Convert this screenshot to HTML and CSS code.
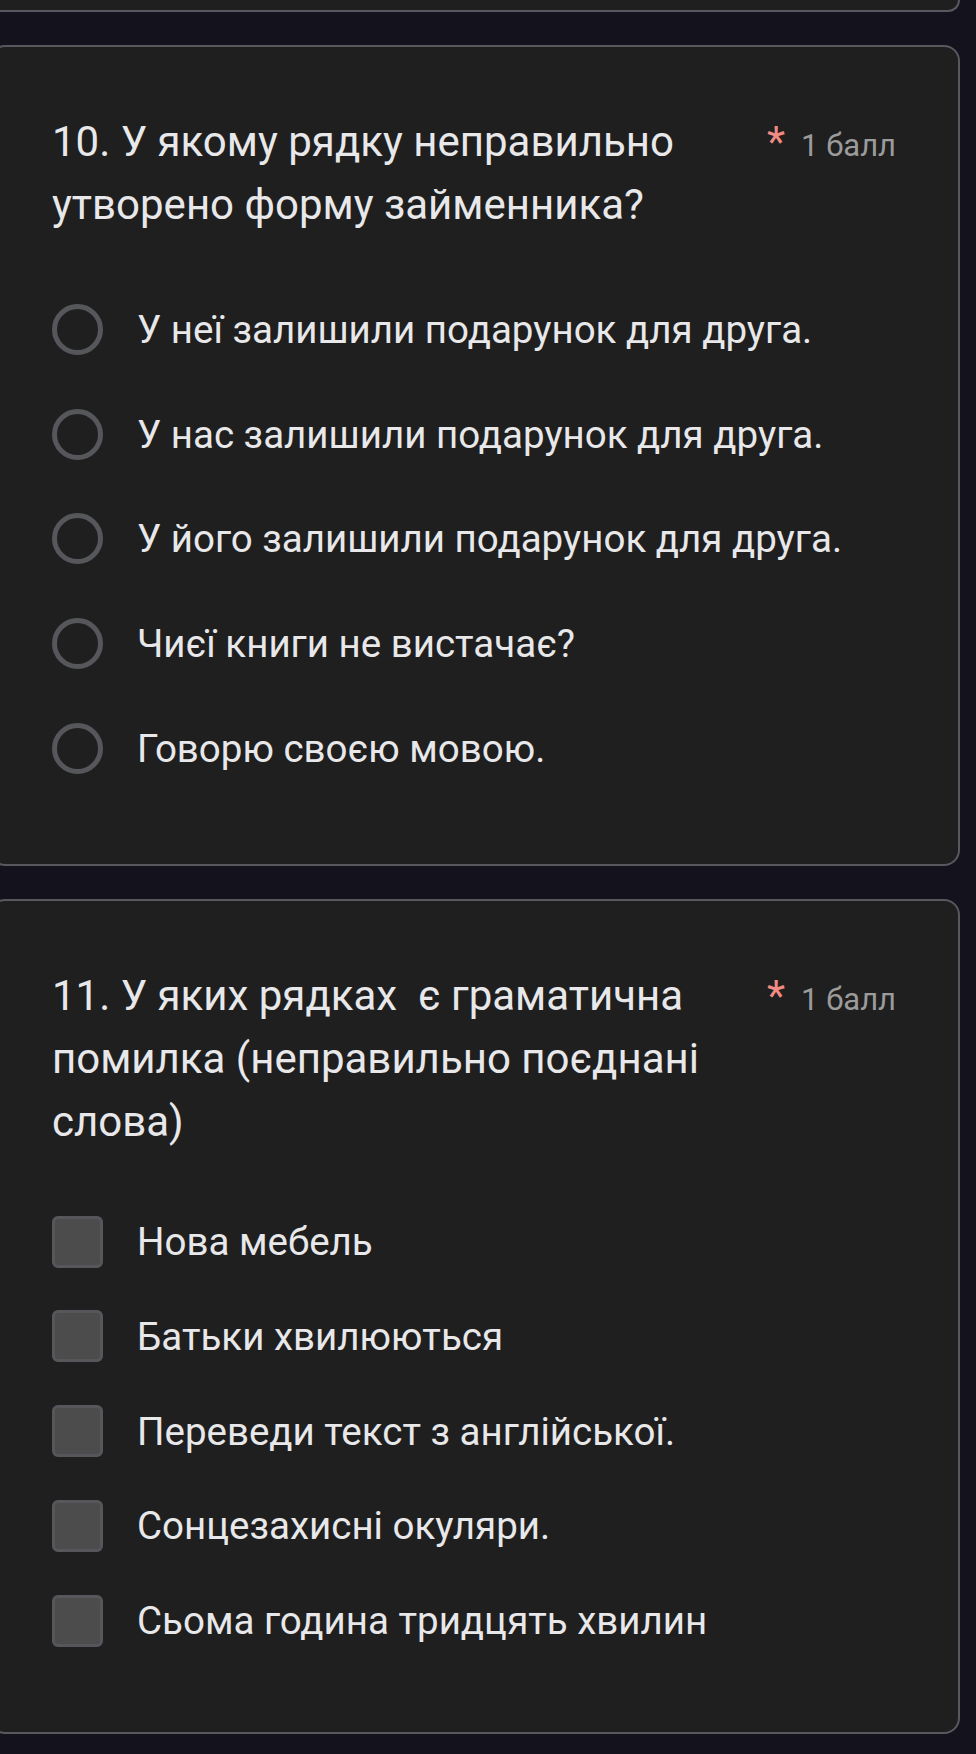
FILE: index.html
```html
<!DOCTYPE html>
<html lang="uk">
  <head>
    <meta charset="UTF-8" />
    <meta name="viewport" content="width=device-width, initial-scale=1.0" />
    <title>Тест</title>
    <link rel="stylesheet" href="styles.css">
  </head>

  <body>
    <div class="card card-stub"></div>

    <div class="card">
      <div class="question-head">
        <div class="question-title">10. У якому рядку неправильно утворено форму займенника?</div>
        <div class="points"><span class="required">*</span>1 балл</div>
      </div>
      <div class="options">
        <label class="option"><span class="radio"></span>У неї залишили подарунок для друга.</label>
        <label class="option"><span class="radio"></span>У нас залишили подарунок для друга.</label>
        <label class="option"><span class="radio"></span>У його залишили подарунок для друга.</label>
        <label class="option"><span class="radio"></span>Чиєї книги не вистачає?</label>
        <label class="option"><span class="radio"></span>Говорю своєю мовою.</label>
      </div>
    </div>

    <div class="card">
      <div class="question-head">
        <div class="question-title">11. У яких рядках&nbsp; є граматична помилка (неправильно поєднані слова)</div>
        <div class="points"><span class="required">*</span>1 балл</div>
      </div>
      <div class="options">
        <label class="option option-check"><span class="checkbox"></span>Нова мебель</label>
        <label class="option option-check"><span class="checkbox"></span>Батьки хвилюються</label>
        <label class="option option-check"><span class="checkbox"></span>Переведи текст з англійської.</label>
        <label class="option option-check"><span class="checkbox"></span>Сонцезахисні окуляри.</label>
        <label class="option option-check"><span class="checkbox"></span>Сьома година тридцять хвилин</label>
      </div>
    </div>
  </body>
</html>
```

FILE: styles.css
```css
body {
  margin: 0;
  background-color: #14121d;
  font-family: Roboto, "Noto Sans", Arial, sans-serif;
  color: #e8e8ea;
}

.card {
  margin: 0 16px 33px -11px;
  padding: 63px 62px 64px 61px;
  background-color: #1f1f1f;
  border: 2px solid #58585e;
  border-radius: 16px;
}

.card-stub {
  height: 10px;
  padding: 0;
  border-top: none;
  border-top-left-radius: 0;
  border-top-right-radius: 0;
}

.question-head {
  display: flex;
  align-items: baseline;
}

.question-title {
  flex: 1;
  font-size: 42px;
  line-height: 63px;
}

.points {
  flex: none;
  margin-left: 16px;
  font-size: 31px;
  color: #9b9b9b;
}

.required {
  color: #f28b82;
  font-size: 42px;
  margin-right: 16px;
}

.options {
  margin-top: 41px;
}

.option {
  display: flex;
  align-items: center;
  height: 104.7px;
  font-size: 38.5px;
}

.option-check {
  height: 94.7px;
}

.radio {
  width: 51px;
  height: 51px;
  box-sizing: border-box;
  border: 5px solid #56575b;
  border-radius: 50%;
  margin-right: 34px;
  flex: none;
}

.checkbox {
  width: 51px;
  height: 52px;
  box-sizing: border-box;
  background-color: #4c4c4d;
  border: 3px solid #56575b;
  border-radius: 6px;
  margin-right: 34px;
  flex: none;
}
```
